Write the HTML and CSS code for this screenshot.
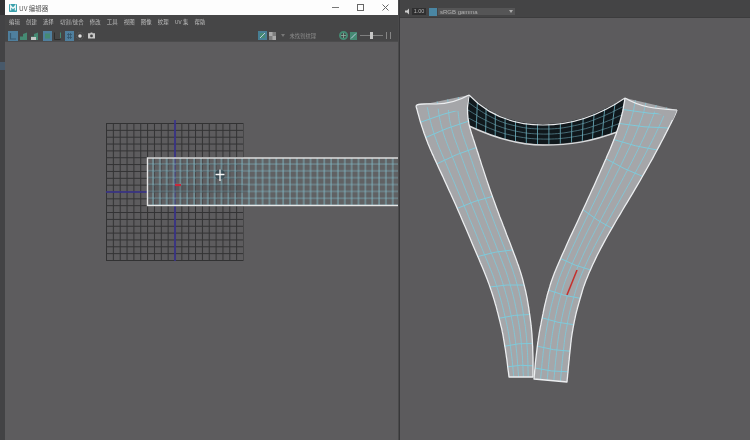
FILE: index.html
```html
<!DOCTYPE html>
<html lang="zh">
<head>
<meta charset="utf-8">
<title>UV 编辑器</title>
<link rel="stylesheet" href="styles.css">
</head>
<body>
<div class="app">
  <aside class="strip">
    <div class="strip-top"></div>
    <div class="strip-mark"></div>
  </aside>
  <section class="uv">
    <header class="titlebar">
      <svg class="logo" viewBox="0 0 10 10" width="8" height="8"><rect width="10" height="10" rx="1" fill="#3aa0ac"/><path d="M2 8V2L5 5.500 8 2V8" fill="none" stroke="#e8f4f4" stroke-width="1.600"/></svg>
      <span class="title">UV 编辑器</span>
      <div class="winbtns">
        <svg width="7" height="7" viewBox="0 0 7 7"><path d="M0 3.500H7" stroke="#777" stroke-width="1"/></svg>
        <svg width="7" height="7" viewBox="0 0 7 7"><rect x=".5" y=".5" width="6" height="6" fill="none" stroke="#666" stroke-width="1"/></svg>
        <svg width="7" height="7" viewBox="0 0 7 7"><path d="M.5 .5L6.500 6.500M6.500 .5L.5 6.500" stroke="#666" stroke-width="1"/></svg>
      </div>
    </header>
    <nav class="menu">
      <span>编辑</span><span>创建</span><span>选择</span><span>切割/缝合</span><span>修改</span><span>工具</span><span>视图</span><span>图像</span><span>纹理</span><span>UV 集</span><span>帮助</span>
    </nav>
    <div class="tools">
      <div class="tool-group">
        <svg width="10" height="10" viewBox="0 0 10 10"><rect width="10" height="10" fill="#4f7f9e"/><path d="M2.500 2V8H8" fill="none" stroke="#3a5a70" stroke-width="1.200"/></svg>
        <svg class="gap-2" width="8" height="8" viewBox="0 0 8 8"><path d="M0 8V4.500H3V2L7 .5V8Z" fill="#458a73"/></svg>
        <svg class="gap-3" width="8" height="8" viewBox="0 0 8 8"><path d="M0 8V4.500H3V2L7 .5V8Z" fill="#458a73"/><path d="M0 8V5H5V8Z" fill="#c4c8c6"/></svg>
        <svg class="gap-4" width="9" height="10" viewBox="0 0 9 10"><rect width="9" height="10" fill="#4f7f9e"/><rect x="2" y="2.500" width="5" height="5" fill="#458a73"/></svg>
        <svg class="gap-2" width="7" height="8" viewBox="0 0 7 8"><path d="M.5 .5V7.500H6.500" fill="none" stroke="#2e2e2e"/><path d="M6.500 .5V6" fill="none" stroke="#458a73"/></svg>
        <svg class="gap-4" width="9" height="10" viewBox="0 0 9 10"><rect width="9" height="10" fill="#4f7f9e"/><path d="M2 3.500H7M2 6.500H7M3.500 2V8M5.500 2V8" stroke="#35566c" stroke-width=".8"/></svg>
        <svg class="gap-2" width="8" height="8" viewBox="0 0 9 9"><circle cx="4.500" cy="4.500" r="2" fill="#dcdcdc"/><circle cx="4.500" cy="4.500" r="4" fill="none" stroke="#777" stroke-width=".6" stroke-dasharray="1 1"/></svg>
        <svg class="gap-4" width="7" height="7" viewBox="0 0 9 8"><path d="M0 1H3L3.500 0H5.500L6 1H9V8H0Z" fill="#c8c8c8"/><circle cx="4.500" cy="4.500" r="1.800" fill="#444"/></svg>
      </div>
      <div class="tool-group">
        <svg width="9" height="9" viewBox="0 0 9 9"><rect width="9" height="9" fill="#477f94"/><rect x="2" y="2" width="5" height="5" fill="#458a73"/><path d="M2 7L7 2" stroke="#bcd"/></svg>
        <svg class="gap-2" width="7" height="8" viewBox="0 0 7 8"><rect width="7" height="8" fill="#7e7e7e"/><path d="M0 0H3.500V4H7V8H3.500V4H0Z" fill="#a9a9a9"/></svg>
        <span class="caret"></span>
        <span class="notex">未找到纹理</span>
        <svg class="gap-l" width="9" height="9" viewBox="0 0 9 9"><circle cx="4.500" cy="4.500" r="3.500" fill="none" stroke="#458a73" stroke-width="2"/><path d="M2 4.500H7M4.500 2V7" stroke="#8fb5a6" stroke-width=".8"/></svg>
        <svg class="gap-2" width="7" height="8" viewBox="0 0 7 8"><rect width="7" height="8" fill="#458a73"/><path d="M1 6.500L6 1.500" stroke="#bcd"/></svg>
        <div class="slider"><span class="knob"></span></div>
        <span class="chev"></span><span class="chev"></span>
      </div>
    </div>
    <div class="canvas">
      <svg class="scene" viewBox="5 42 393 398" preserveAspectRatio="none">
        <defs>
          <pattern id="darkgrid" x="106" y="123" width="6.850" height="6.850" patternUnits="userSpaceOnUse">
            <path d="M.5 0V6.850M0 .5H6.850" fill="none" stroke="#323233" stroke-width="1"/>
          </pattern>
          <pattern id="tealgrid" x="150" y="161" width="6.850" height="6.850" patternUnits="userSpaceOnUse">
            <path d="M3 0V6.850" fill="none" stroke="#82bcc9" stroke-width="1" opacity=".85"/>
            <path d="M0 3H6.850" fill="none" stroke="#82bcc9" stroke-width="1" opacity=".6"/>
          </pattern>
        </defs>
        <rect x="106" y="123" width="137.500" height="138" fill="url(#darkgrid)"/>
        <path d="M175 120V261M106 192H147" stroke="#3a3390" stroke-width="1.600" fill="none"/>
        <rect x="147.500" y="158" width="95.500" height="47.500" fill="#636466" opacity=".45"/>
        <rect x="243" y="158" width="165" height="47.500" fill="#606163"/>
        <rect x="147.500" y="158" width="260" height="47.500" fill="url(#tealgrid)"/>
        <rect x="147.500" y="185" width="100" height="8" fill="#454547" opacity=".25"/>
        <rect x="147.500" y="158" width="260" height="47.500" fill="none" stroke="#e6e6e6" stroke-width="1.400"/>
        <path d="M175 185H181" stroke="#c8283a" stroke-width="2.200"/>
        <circle cx="220" cy="174.500" r="5" fill="#233842" opacity=".6"/>
        <path d="M215.500 174.500H224.500M220 169.500V181" stroke="#f8f8f8" stroke-width="1.300"/>
      </svg>
    </div>
  </section>
  <div class="divider"></div>
  <section class="view">
    <div class="viewbar">
      <svg width="6" height="7" viewBox="0 0 6 7"><path d="M0 2.500H2L4 .5V6.500L2 4.500H0Z" fill="#ccc"/></svg>
      <span class="gain">1.00</span>
      <span class="cs-icon"></span>
      <div class="cs"><span>sRGB gamma</span><i></i></div>
    </div>
    <div class="stage">
      <svg id="mesh" class="scene" viewBox="400 18 350 422" preserveAspectRatio="none"></svg>
    </div>
  </section>
</div>
<script src="mesh.js"></script>
</body>
</html>
```
FILE: styles.css
```css
* { box-sizing: border-box; }
html, body { margin: 0; height: 100%; overflow: hidden; background: #5d5c5e; }
body { font-family: "Noto Sans CJK SC", "Liberation Sans", sans-serif; }
.app { display: flex; width: 750px; height: 440px; }

.strip { width: 5px; background: #434345; display: flex; flex-direction: column; filter: blur(.6px); }
.strip-top { height: 15px; background: #333335; }
.strip-mark { width: 5px; height: 8px; margin-top: 47px; background: #48596a; }

.uv { width: 393px; display: flex; flex-direction: column; background: #5d5c5e; }
.titlebar { height: 15px; background: #fdfdfd; display: flex; align-items: center; padding-left: 4px; flex: none; }
.logo { flex: none; filter: blur(.3px); }
.title { margin-left: 2px; font-size: 6.500px; color: #555; filter: blur(.35px); }
.winbtns { margin-left: auto; display: flex; align-items: center; gap: 18px; padding-right: 9px; filter: blur(.3px); }

.menu { height: 13px; background: #464647; display: flex; align-items: center; gap: 6.200px; padding-left: 4px; flex: none; font-size: 5.400px; color: #bdbdbd; }
.menu span { filter: blur(.35px); white-space: nowrap; }

.tools { height: 14px; background: #464647; display: flex; align-items: center; justify-content: space-between; padding: 2px 7px 0 3px; flex: none; border-bottom: 1px solid #4c4c4d; }
.tool-group { display: flex; align-items: center; filter: blur(.4px); }
.gap-2 { margin-left: 2px; }
.gap-3 { margin-left: 3px; }
.gap-4 { margin-left: 4px; }
.gap-l { margin-left: 23px; }
.caret { margin-left: 5px; border-top: 3px solid #777; border-left: 2px solid transparent; border-right: 2px solid transparent; }
.notex { margin-left: 5px; font-size: 5.300px; color: #8a8a8a; }
.slider { margin-left: 3px; width: 23px; height: 1px; background: #7f7f7f; display: flex; align-items: center; justify-content: center; }
.knob { display: block; width: 3px; height: 7px; background: #c6c6c6; }
.chev { margin-left: 3px; width: 1px; height: 7px; background: #858585; }

.canvas { flex: 1; position: relative; background: #5d5c5e; }
.scene { position: absolute; inset: 0; width: 100%; height: 100%; display: block; filter: blur(.6px); }

.divider { width: 2px; background: #38383a; border-left: 1px solid #4a4a4b; }

.view { flex: 1; display: flex; flex-direction: column; background: #5c5b5d; }
.viewbar { height: 18px; background: #444445; display: flex; align-items: center; padding: 6px 0 0 5px; flex: none; border-bottom: 1px solid #3c3c3d; }
.viewbar > * { filter: blur(.35px); }
.gain { margin-left: 1px; width: 14px; height: 7px; background: #2f2f30; color: #b5b5b5; font-size: 5.500px; line-height: 7px; text-align: center; font-family: "Liberation Sans", sans-serif; }
.cs-icon { margin-left: 3px; width: 8px; height: 8px; background: #4a86a3; }
.cs { margin-left: 1px; width: 77px; height: 7px; background: #555556; display: flex; align-items: center; justify-content: space-between; padding: 0 2px; color: #b0b0b0; font-size: 6px; font-family: "Liberation Sans", sans-serif; }
.cs i { border-top: 3px solid #aaa; border-left: 2.500px solid transparent; border-right: 2.500px solid transparent; }
.stage { flex: 1; position: relative; }
```
FILE: mesh.js
```js
var NS = "http://www.w3.org/2000/svg";
var svg = document.getElementById("mesh");

/* Resample a knot list densely and smooth it, so the edges stay free of lumps. */
function smooth(pts) {
  var dense = [], perSeg = 30, i, j, n = pts.length - 1;
  for (i = 0; i < n; i++) {
    for (j = 0; j < perSeg; j++) {
      var u = j / perSeg;
      dense.push([pts[i][0] + (pts[i + 1][0] - pts[i][0]) * u, pts[i][1] + (pts[i + 1][1] - pts[i][1]) * u]);
    }
  }
  dense.push(pts[n].slice());
  var out = [], w = 20, last = dense.length - 1;
  for (i = 0; i <= last; i++) {
    var r = Math.min(w, i, last - i), sx = 0, sy = 0;
    for (j = i - r; j <= i + r; j++) { sx += dense[j][0]; sy += dense[j][1]; }
    out.push([sx / (2 * r + 1), sy / (2 * r + 1)]);
  }
  return out;
}
function sample(pts, t) {
  var n = pts.length - 1, f = Math.min(t * n, n - 1e-6), i = Math.floor(f), u = f - i;
  return [pts[i][0] + (pts[i + 1][0] - pts[i][0]) * u, pts[i][1] + (pts[i + 1][1] - pts[i][1]) * u];
}
function curve(a, b, s, steps) {
  var d = "";
  for (var i = 0; i <= steps; i++) {
    var t = i / steps, p = sample(a, t), q = sample(b, t);
    d += (i ? "L" : "M") + (p[0] + (q[0] - p[0]) * s).toFixed(1) + " " + (p[1] + (q[1] - p[1]) * s).toFixed(1);
  }
  return d;
}
function across(a, b, t, bow) {
  var p = sample(a, t), q = sample(b, t);
  var mx = (p[0] + q[0]) / 2 + bow[0], my = (p[1] + q[1]) / 2 + bow[1];
  return "M" + p[0].toFixed(1) + " " + p[1].toFixed(1) + "Q" + mx.toFixed(1) + " " + my.toFixed(1) + " " + q[0].toFixed(1) + " " + q[1].toFixed(1);
}
function add(d, fill, stroke, w, op) {
  var e = document.createElementNS(NS, "path");
  e.setAttribute("d", d);
  e.setAttribute("fill", fill || "none");
  if (stroke) { e.setAttribute("stroke", stroke); e.setAttribute("stroke-width", w); }
  if (op) e.setAttribute("opacity", op);
  e.setAttribute("stroke-linejoin", "round");
  svg.appendChild(e);
}
/* Open path down one edge and back up the other: the top is left unstroked. */
function edges(a, b) {
  var d = "", i;
  for (i = 0; i <= 100; i++) { var p = sample(a, i / 100); d += (i ? "L" : "M") + p[0].toFixed(1) + " " + p[1].toFixed(1); }
  for (i = 100; i >= 0; i--) { var q = sample(b, i / 100); d += "L" + q[0].toFixed(1) + " " + q[1].toFixed(1); }
  return d;
}
function strap(a, b, cols, rows, bow) {
  add(edges(a, b) + "Z", "#a5a6a9");
  var teal = "#7ccbdc";
  for (var c = 1; c < cols; c++) add(curve(a, b, c / cols, 100), null, teal, 0.9, 0.9);
  rows.forEach(function (t) { add(across(a, b, t, bow), null, teal, 1, 0.95); });
  add(edges(a, b), null, "#eceef0", 1.3);
}

var collarTop = smooth([[469, 95], [490, 112], [515, 122], [543, 125], [572, 122], [600, 112], [625, 98]]);
var collarBot = smooth([[467, 125], [490, 135], [515, 142], [543, 145], [572, 143], [598, 138], [620, 131]]);
add(edges(collarTop, collarBot) + "Z", "#10181c");
for (var c = 1; c < 4; c++) add(curve(collarTop, collarBot, c / 4, 60), null, "#5f8f9c", 0.7);
for (var k = 1; k < 15; k++) add(across(collarTop, collarBot, k / 15, [0, 0]), null, "#6fb5c4", 0.8);
add("M469 95C490 117 515 125 543 125S600 115 625 98", null, "#e8e8ea", 1.1);
add("M467 125C490 136 515 145 543 145S590 142 620 131", null, "#d8dadc", 1.4);

var leftOuter = smooth([[416, 106], [424, 135], [435, 160], [457, 207], [480, 262], [490, 285], [500, 320], [505, 345], [509, 377]]);
var leftInner = smooth([[469, 95], [466, 118], [475, 143], [491, 195], [515, 255], [525, 285], [530, 315], [533, 342], [533, 377]]);
strap(leftOuter, leftInner, 5, [0.07, 0.14, 0.25, 0.375, 0.5, 0.625, 0.75, 0.875, 0.96], [0, -2]);
add("M416 106C417 103 425 104 436 104C448 104 460 100 469 95L466 112Z", "#a5a6a9");
add("M416 106C417 103 425 104 436 104C448 104 460 100 469 95", null, "#eceef0", 1.2);

var rightOuter = smooth([[677, 110], [673, 120], [643, 177], [610, 230], [588, 273], [580, 298], [573, 325], [570, 350], [567, 382]]);
var rightInner = smooth([[625, 98], [621, 122], [608, 155], [583, 210], [558, 263], [548, 290], [542, 318], [537, 345], [534, 379]]);
strap(rightOuter, rightInner, 5, [0.06, 0.125, 0.19, 0.25, 0.375, 0.5, 0.625, 0.75, 0.875, 0.96], [0, 2]);
add("M625 98C640 107 655 109 677 110L673 120Z", "#a5a6a9");
add("M625 98C640 107 655 109 677 110", null, "#eceef0", 1.2);
add("M577 270L567 295", null, "#c6302c", 1.6);
```
